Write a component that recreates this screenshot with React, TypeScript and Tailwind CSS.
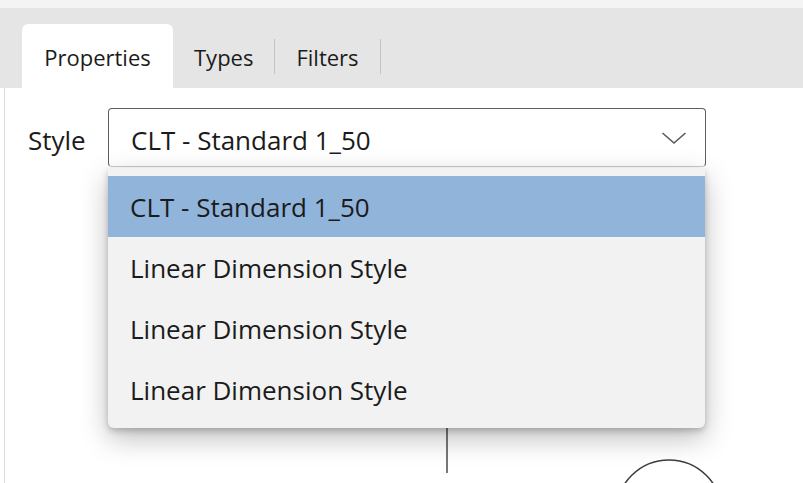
import React from 'react';

const items = ['CLT - Standard 1_50', 'Linear Dimension Style', 'Linear Dimension Style', 'Linear Dimension Style'];

export default function App() {
  const selected = 0;

  return (
    <div className="w-[803px] h-[483px] overflow-hidden bg-white flex flex-col font-['Open_Sans',sans-serif] text-[#1b1b1b]">
      <div className="h-[8px] bg-[#f4f4f4]" />

      {/* tab strip */}
      <div className="h-[80px] bg-[#e5e5e5] flex items-end pl-[22px]">
        <div className="w-[151px] h-[64px] bg-white rounded-t-[6px] flex items-center justify-center text-[22px] pt-[3px]">
          Properties
        </div>
        <div className="h-[64px] flex items-center">
          <span className="px-[21px] text-[22px] pt-[3px]">Types</span>
          <span className="w-px h-[35px] bg-[#c4c4c4]" />
          <span className="px-[21px] text-[22px] pt-[3px]">Filters</span>
          <span className="w-px h-[35px] bg-[#c4c4c4]" />
        </div>
      </div>

      {/* content */}
      <div className="relative flex-1 border-l border-[#dadada] ml-[4px]">
        <svg className="absolute inset-0" width="799" height="395" viewBox="0 0 799 395">
          <line x1="442" y1="330" x2="442" y2="385" stroke="#4a4a4a" strokeWidth="1.5" />
          <circle cx="664" cy="425" r="53" fill="none" stroke="#3c3c3c" strokeWidth="1.5" />
        </svg>

        <div className="relative flex items-center pt-[20px] pl-[23px]">
          <span className="w-[80px] text-[26px] leading-none pt-[4px]">Style</span>
          <div className="w-[598px] h-[59px] bg-white border border-[#5e5e5e] border-b-[#cfcfcf] rounded-[4px] flex items-center justify-between pl-[22px] pr-[18px]">
            <span className="text-[26px] leading-none pt-[4px]">CLT - Standard 1_50</span>
            <svg width="26" height="14" viewBox="0 0 26 14">
              <path d="M1.5 2 L13 12 L24.5 2" fill="none" stroke="#5a5a5a" strokeWidth="1.6" />
            </svg>
          </div>
        </div>

        {/* dropdown menu */}
        <div className="absolute left-[103px] top-[80px] w-[597px] bg-[#f2f2f2] rounded-b-[6px] pt-[8px] pb-[8px] shadow-[0_10px_28px_rgba(0,0,0,0.26),0_3px_6px_rgba(0,0,0,0.2)]">
          {items.map((label, i) => (
            <div
              key={i}
              className={
                'h-[61px] flex items-center pl-[22px] text-[26px] pt-[1px] ' +
                (i === selected ? 'bg-[#91b5da]' : '')
              }
            >
              {label}
            </div>
          ))}
        </div>
      </div>
    </div>
  );
}
